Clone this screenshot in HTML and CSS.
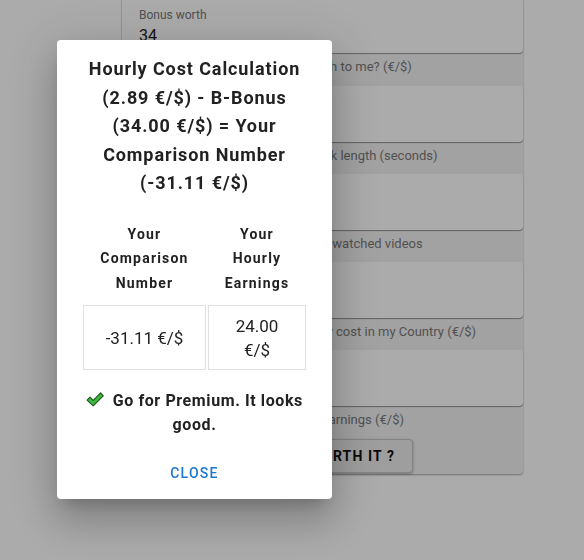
FILE: index.html
```html
<!DOCTYPE html>
<html lang="en">
<head>
<meta charset="utf-8">
<title>Is YouTube Premium worth it?</title>
<link rel="stylesheet" href="styles.css">
</head>
<body>
<div class="page">
  <div class="panel">
    <div class="field">
      <div class="field-label">Bonus worth</div>
      <div class="field-value">34</div>
    </div>
    <div class="band band-first">What is this worth to me? (€/$)</div>
    <div class="field"></div>
    <div class="band band-break">Average advert break length (seconds)</div>
    <div class="field"></div>
    <div class="band">Number of already watched videos</div>
    <div class="field"></div>
    <div class="band band-cost">YouTube Premium's monthly cost in my Country (€/$)</div>
    <div class="field"></div>
    <div class="band band-last">Your Hourly Earnings (€/$)</div>
    <div class="button-row"><button class="worth-btn">IS IT WORTH IT ?</button></div>
  </div>
</div>
<div class="overlay"></div>
<div class="dialog" role="dialog">
  <h2 class="dialog-title">Hourly Cost Calculation (2.89 €/$) - B-Bonus (34.00 €/$) = Your Comparison Number (-31.11 €/$)</h2>
  <div class="dialog-content">
    <table class="compare">
      <colgroup><col class="col-a"><col class="col-b"></colgroup>
      <thead>
        <tr><th>Your Comparison Number</th><th>Your Hourly Earnings</th></tr>
      </thead>
      <tbody>
        <tr><td>-31.11 €/$</td><td>24.00 €/$</td></tr>
      </tbody>
    </table>
    <p class="verdict"><svg class="check" width="18" height="15" viewBox="0 0 17 14"><polygon points="1,7.5 3.8,4.8 6.8,7.8 13.8,0.8 16.3,3.5 6.8,13" fill="#3cb83c" stroke="#1b4f1b" stroke-width="1" stroke-linejoin="round"/></svg> Go for Premium. It looks good.</p>
  </div>
  <div class="dialog-actions"><button class="close">Close</button></div>
</div>
</body>
</html>
```
FILE: styles.css
```css
* { box-sizing: border-box; }
html, body { margin: 0; }
body {
  width: 584px;
  height: 560px;
  overflow: hidden;
  background: #ffffff;
  font-family: Roboto, "Liberation Sans", sans-serif;
  color: #212121;
}
.page { padding-left: 122px; }
.panel {
  width: 401px;
  margin-top: -3px;
  background: #f2f2f2;
  border-radius: 0 0 4px 4px;
  box-shadow: 0 1px 2px rgba(0,0,0,0.35);
  padding-bottom: 1px;
}
.field {
  height: 56px;
  background: #ffffff;
  border-radius: 4px;
  box-shadow: 0 1px 1px rgba(0,0,0,0.4);
  padding: 10px 17px 0;
}
.field-label { font-size: 12px; line-height: 16px; color: #7a7a7a; }
.field-value { font-size: 16px; line-height: 20px; color: #222; margin-top: 3px; }
.band {
  height: 32px;
  padding-top: 5px;
  font-size: 13px;
  line-height: 18px;
  color: #7a7a7a;
  text-align: center;
  white-space: nowrap;
}
.band-first { height: 33px; }
.band-break { padding-left: 8px; }
.band-cost { padding-left: 0; }
.band-last { height: 28px; padding-left: 10px; }
.button-row {
  display: flex;
  justify-content: flex-end;
  padding-right: 110px;
  margin-top: 5px;
}
.worth-btn {
  height: 34px;
  padding: 0 17px;
  font-family: inherit;
  font-size: 14px;
  font-weight: 700;
  letter-spacing: 1.1px;
  color: #111;
  background: #ececec;
  border: 1px solid #c4c4c4;
  border-radius: 4px;
  box-shadow: 0 1px 3px rgba(0,0,0,0.3);
}
.overlay {
  position: fixed;
  inset: 0;
  background: rgba(0,0,0,0.33);
}
.dialog {
  position: absolute;
  left: 57px;
  top: 40px;
  width: 275px;
  height: 459px;
  background: #fff;
  border-radius: 4px;
  box-shadow: 0 11px 15px -7px rgba(0,0,0,0.2), 0 24px 38px 3px rgba(0,0,0,0.14), 0 9px 46px 8px rgba(0,0,0,0.12);
  display: flex;
  flex-direction: column;
}
.dialog-title {
  margin: 0;
  padding: 15px 24px 0;
  font-size: 18px;
  line-height: 28.5px;
  font-weight: 700;
  letter-spacing: 0.9px;
  text-align: center;
  color: #212121;
}
.dialog-content { padding: 0 24px; }
.compare {
  width: 227px;
  margin-top: 14px;
  border-spacing: 2px;
  table-layout: fixed;
}
.col-a { width: 123px; }
.col-b { width: 98px; }
.compare th {
  padding: 8px;
  font-size: 14px;
  line-height: 24.5px;
  font-weight: 700;
  letter-spacing: 1.2px;
  text-align: center;
}
.compare td {
  border: 1px solid #e0e0e0;
  padding: 7.5px 14px;
  font-size: 17px;
  line-height: 24px;
  text-align: center;
}
.verdict {
  margin: 17px 0 0;
  font-size: 16px;
  line-height: 24px;
  font-weight: 700;
  letter-spacing: 0.6px;
  text-align: center;
}
.check { vertical-align: -1px; margin-right: 4px; }
.dialog-actions {
  margin-top: auto;
  padding: 8px;
  display: flex;
  justify-content: center;
}
.close {
  height: 36px;
  padding: 6px 8px;
  font-family: inherit;
  font-size: 14px;
  font-weight: 500;
  line-height: 24px;
  letter-spacing: 1.25px;
  text-transform: uppercase;
  color: #1976d2;
  background: none;
  border: 0;
}
```
